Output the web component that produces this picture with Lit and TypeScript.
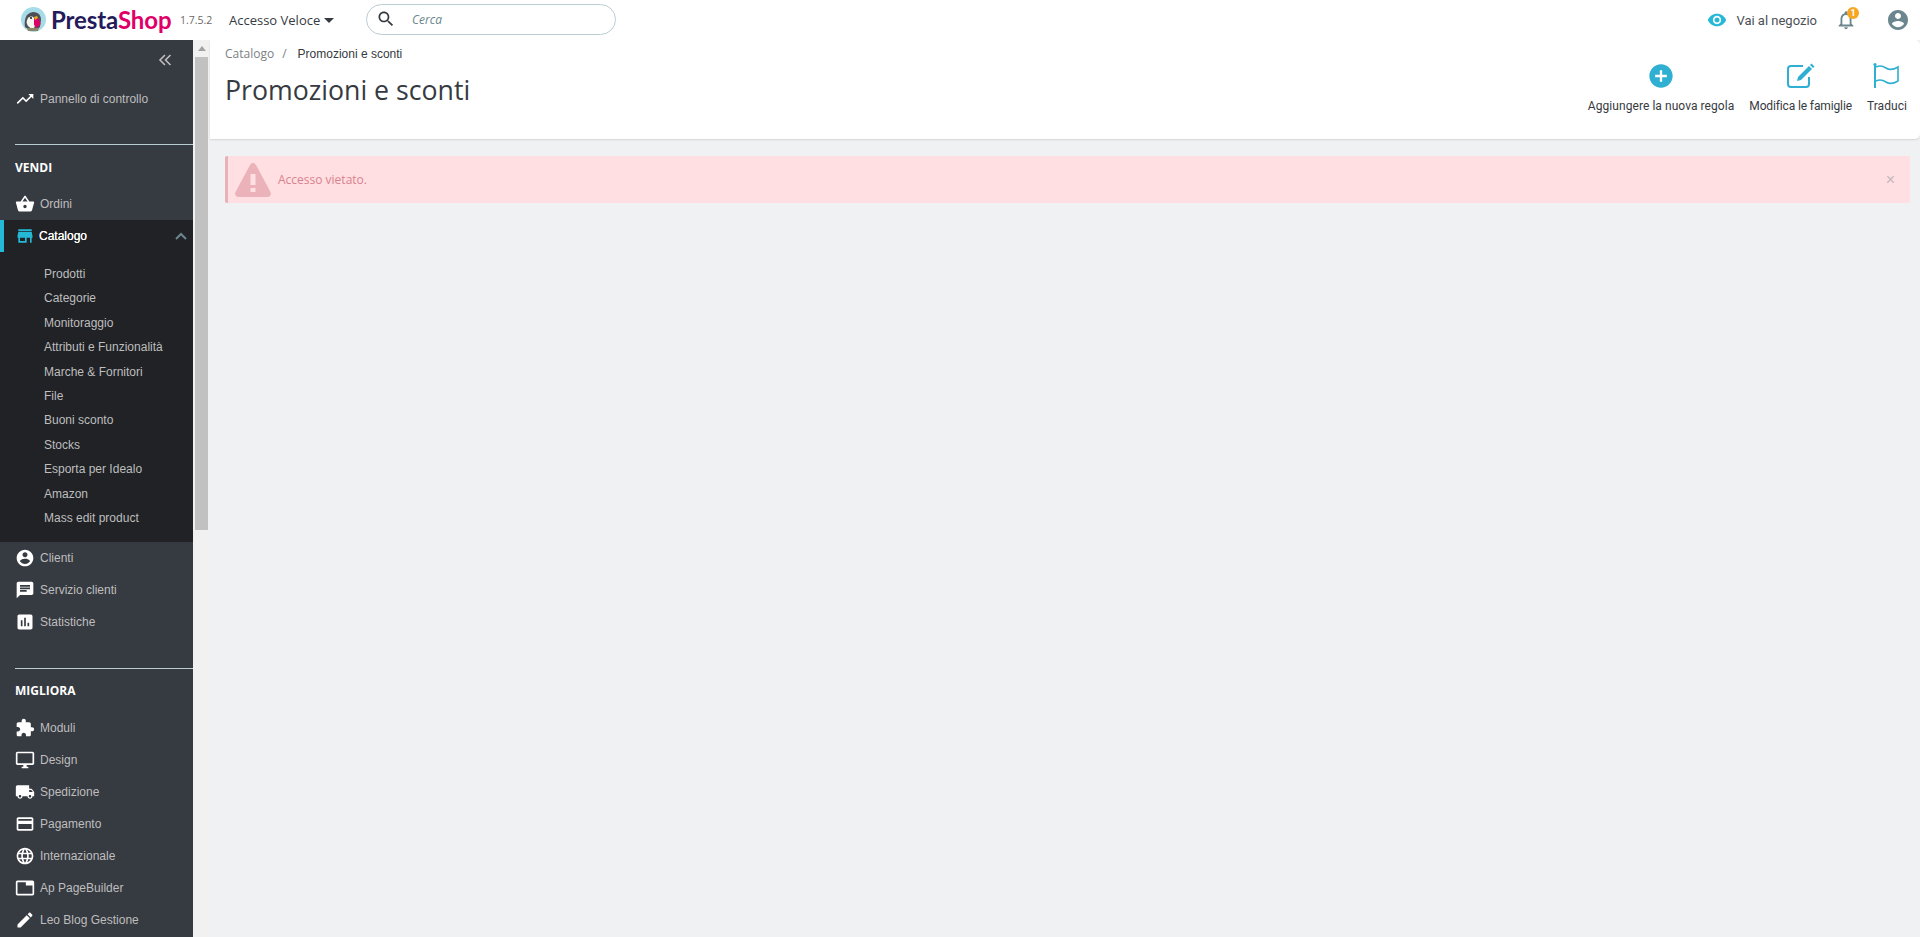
import { LitElement, html, css, svg } from "lit";
import { customElement } from "lit/decorators.js";

const P: Record<string, string> = {
  trend: "M16 6l2.29 2.29-4.88 4.88-4-4L2 16.59 3.41 18l6-6 4 4 6.3-6.29L22 12V6z",
  basket: "M17.21 9l-4.38-6.56c-.19-.28-.51-.42-.83-.42-.32 0-.64.14-.83.43L6.79 9H2c-.55 0-1 .45-1 1 0 .09.01.18.04.27l2.54 9.27c.23.84 1 1.46 1.92 1.46h13c.92 0 1.69-.62 1.93-1.46l2.54-9.27L23 10c0-.55-.45-1-1-1h-4.79zM9 9l3-4.4L15 9H9zm3 8c-1.1 0-2-.9-2-2s.9-2 2-2 2 .9 2 2-.9 2-2 2z",
  store: "M20 4H4v2h16V4zm1 10v-2l-1-5H4l-1 5v2h1v6h10v-6h4v6h2v-6h1zm-9 4H6v-4h6v4z",
  account: "M12 2C6.48 2 2 6.48 2 12s4.48 10 10 10 10-4.48 10-10S17.52 2 12 2zm0 3c1.66 0 3 1.34 3 3s-1.34 3-3 3-3-1.34-3-3 1.34-3 3-3zm0 14.2c-2.5 0-4.71-1.28-6-3.22.03-1.99 4-3.08 6-3.08 1.99 0 5.97 1.09 6 3.08-1.29 1.94-3.5 3.22-6 3.22z",
  chat: "M20 2H4c-1.1 0-1.99.9-1.99 2L2 22l4-4h14c1.1 0 2-.9 2-2V4c0-1.1-.9-2-2-2zM6 9h12v2H6V9zm8 5H6v-2h8v2zm4-6H6V6h12v2z",
  chart: "M19 3H5c-1.1 0-2 .9-2 2v14c0 1.1.9 2 2 2h14c1.1 0 2-.9 2-2V5c0-1.1-.9-2-2-2zM9 17H7v-7h2v7zm4 0h-2V7h2v10zm4 0h-2v-4h2v4z",
  puzzle: "M20.5 11H19V7c0-1.1-.9-2-2-2h-4V3.5C13 2.12 11.88 1 10.5 1S8 2.12 8 3.5V5H4c-1.1 0-1.99.9-1.99 2v3.8H3.5c1.49 0 2.7 1.21 2.7 2.7s-1.21 2.7-2.7 2.7H2V20c0 1.1.9 2 2 2h3.8v-1.5c0-1.49 1.21-2.7 2.7-2.7 1.49 0 2.7 1.21 2.7 2.7V22H17c1.1 0 2-.9 2-2v-4h1.5c1.38 0 2.5-1.12 2.5-2.5S21.88 11 20.5 11z",
  desktop: "M21 2H3c-1.1 0-2 .9-2 2v12c0 1.1.9 2 2 2h7v2H8v2h8v-2h-2v-2h7c1.1 0 2-.9 2-2V4c0-1.1-.9-2-2-2zm0 14H3V4h18v12z",
  truck: "M20 8h-3V4H3c-1.1 0-2 .9-2 2v11h2c0 1.66 1.34 3 3 3s3-1.34 3-3h6c0 1.66 1.34 3 3 3s3-1.34 3-3h2v-5l-3-4zM6 18.5c-.83 0-1.5-.67-1.5-1.5s.67-1.5 1.5-1.5 1.5.67 1.5 1.5-.67 1.5-1.5 1.5zm13.5-9l1.96 2.5H17V9.5h2.5zm-1.5 9c-.83 0-1.5-.67-1.5-1.5s.67-1.5 1.5-1.5 1.5.67 1.5 1.5-.67 1.5-1.5 1.5z",
  card: "M20 4H4c-1.11 0-1.99.89-1.99 2L2 18c0 1.11.89 2 2 2h16c1.11 0 2-.89 2-2V6c0-1.11-.89-2-2-2zm0 14H4v-6h16v6zm0-10H4V6h16v2z",
  globe: "M11.99 2C6.47 2 2 6.48 2 12s4.47 10 9.99 10C17.52 22 22 17.52 22 12S17.52 2 11.99 2zm6.93 6h-2.95c-.32-1.25-.78-2.45-1.38-3.56 1.84.63 3.37 1.91 4.33 3.56zM12 4.04c.83 1.2 1.48 2.53 1.91 3.96h-3.82c.43-1.43 1.08-2.76 1.91-3.96zM4.26 14C4.1 13.36 4 12.69 4 12s.1-1.36.26-2h3.38c-.08.66-.14 1.32-.14 2 0 .68.06 1.34.14 2H4.26zm.82 2h2.95c.32 1.25.78 2.45 1.38 3.56-1.84-.63-3.37-1.9-4.33-3.56zm2.95-8H5.08c.96-1.66 2.49-2.93 4.33-3.56C8.81 5.55 8.35 6.75 8.03 8zM12 19.96c-.83-1.2-1.48-2.53-1.91-3.96h3.82c-.43 1.43-1.08 2.76-1.91 3.96zM14.34 14H9.66c-.09-.66-.16-1.32-.16-2 0-.68.07-1.35.16-2h4.68c.09.65.16 1.32.16 2 0 .68-.07 1.34-.16 2zm.25 5.56c.6-1.11 1.06-2.31 1.38-3.56h2.95c-.96 1.65-2.49 2.93-4.33 3.56zM16.36 14c.08-.66.14-1.32.14-2 0-.68-.06-1.34-.14-2h3.38c.16.64.26 1.31.26 2s-.1 1.36-.26 2h-3.38z",
  tab: "M21 3H3c-1.1 0-2 .9-2 2v14c0 1.1.9 2 2 2h18c1.1 0 2-.9 2-2V5c0-1.1-.9-2-2-2zm0 16H3V5h10v4h8v10z",
  edit: "M3 17.25V21h3.75L17.81 9.94l-3.75-3.75L3 17.25zM20.71 7.04c.39-.39.39-1.02 0-1.41l-2.34-2.34c-.39-.39-1.02-.39-1.41 0l-1.83 1.83 3.75 3.75 1.83-1.83z",
  eye: "M12 4.5C7 4.5 2.73 7.61 1 12c1.73 4.39 6 7.5 11 7.5s9.27-3.11 11-7.5c-1.73-4.39-6-7.5-11-7.5zM12 17c-2.76 0-5-2.24-5-5s2.24-5 5-5 5 2.24 5 5-2.24 5-5 5zm0-8c-1.66 0-3 1.34-3 3s1.34 3 3 3 3-1.34 3-3-1.34-3-3-3z",
  bell: "M12 22c1.1 0 2-.9 2-2h-4c0 1.1.9 2 2 2zm6-6v-5c0-3.07-1.63-5.64-4.5-6.32V4c0-.83-.67-1.5-1.5-1.5s-1.5.67-1.5 1.5v.68C7.64 5.36 6 7.92 6 11v5l-2 2v1h16v-1l-2-2zm-2 1H8v-6c0-2.48 1.51-4.5 4-4.5s4 2.02 4 4.5v6z",
  add: "M12 2C6.48 2 2 6.48 2 12s4.48 10 10 10 10-4.48 10-10S17.52 2 12 2zm5 11h-4v4h-2v-4H7v-2h4V7h2v4h4v2z",
  search: "M15.5 14h-.79l-.28-.27C15.41 12.59 16 11.11 16 9.5 16 5.91 13.09 3 9.5 3S3 5.91 3 9.5 5.91 16 9.5 16c1.61 0 3.09-.59 4.23-1.57l.27.28v.79l5 4.99L20.49 19l-4.99-5zm-6 0C7.01 14 5 11.99 5 9.5S7.01 5 9.5 5 14 7.01 14 9.5 11.99 14 9.5 14z",
};

const icon = (n: string, cls = "") =>
  html`<svg class="ic ${cls}" viewBox="0 0 24 24" fill="currentColor"><path d=${P[n]}></path></svg>`;

const logoMark = svg`
  <circle cx="12.5" cy="12.5" r="12.5" fill="#a6dbe8"/>
  <path d="M4 20c-1-6 0-14 8-15 6 0 8 4 8 8l-1 7c-2 3-12 3-15 0z" fill="#4d4f55"/>
  <path d="M7 11c2-2 5-2 6 0 2 3 2 7 0 10-3 1-6-1-7-4-1-2 0-4 1-6z" fill="#f4f4f0"/>
  <circle cx="10" cy="11" r="1.1" fill="#222"/>
  <path d="M13 11l5 1 1.5 5-3.5 4-3-3z" fill="#df0067"/>
  <path d="M13 10l3-1 1 2-3 2z" fill="#f3a81c"/>
  <path d="M6 21h12l-1 3H7z" fill="#8d8468"/>`;

const top1 = [{ i: "basket", t: "Ordini" }];
const sub = ["Prodotti", "Categorie", "Monitoraggio", "Attributi e Funzionalità", "Marche & Fornitori", "File", "Buoni sconto", "Stocks", "Esporta per Idealo", "Amazon", "Mass edit product"];
const mid = [
  { i: "account", t: "Clienti" },
  { i: "chat", t: "Servizio clienti" },
  { i: "chart", t: "Statistiche" },
];
const low = [
  { i: "puzzle", t: "Moduli" },
  { i: "desktop", t: "Design" },
  { i: "truck", t: "Spedizione" },
  { i: "card", t: "Pagamento" },
  { i: "globe", t: "Internazionale" },
  { i: "tab", t: "Ap PageBuilder" },
  { i: "edit", t: "Leo Blog Gestione" },
];

@customElement("app-root")
export class AppRoot extends LitElement {
  static styles = css`
    :host { display: block; width: 1920px; height: 937px; overflow: hidden; background: #eff1f2; font-family: "Liberation Sans", Arial, sans-serif; }
    * { box-sizing: border-box; }
    .ic { display: block; flex: none; }

    .top { height: 40px; background: #fff; display: flex; align-items: center; padding-left: 21px; }
    .mark { width: 25px; height: 25px; margin-top: -1px; flex: none; }
    .brand { margin-left: 5px; font: 700 24px/40px Lato, sans-serif; color: #251b5b; width: 129px; letter-spacing: -.1px; }
    .brand b { font-weight: 700; color: #df0067; }
    .ver { font: 10.5px "Open Sans", sans-serif; color: #6c6868; width: 49px; }
    .quick { font: 13px "Open Sans", sans-serif; color: #363a41; display: flex; align-items: center; gap: 4px; width: 137px; }
    .caret { width: 0; height: 0; border: 5px solid transparent; border-top: 5px solid #363a41; border-bottom: 0; }
    .search { width: 250px; height: 31px; margin-top: -2px; border: 1px solid #bbcdd2; border-radius: 16px; display: flex; align-items: center; padding-left: 9px; font: italic 12px "Open Sans", sans-serif; color: #6c868e; }
    .search .ic { width: 20px; height: 20px; color: #363a41; margin-right: 16px; }
    .right { margin-left: auto; display: flex; align-items: center; padding-right: 10px; }
    .shop { display: flex; align-items: center; font: 13px Roboto, sans-serif; color: #4a4f57; }
    .shop .ic { width: 20px; height: 20px; color: #25b9d7; margin-right: 9px; }
    .bell { position: relative; margin-left: 18px; width: 22px; height: 22px; color: #6c868e; }
    .bell .ic { width: 22px; height: 22px; }
    .badge { position: absolute; top: -2px; right: -2px; width: 12px; height: 12px; border-radius: 50%; background: #f5a623; color: #fff; font: 700 9px/12px Roboto, sans-serif; text-align: center; }
    .acc { width: 24px; height: 24px; margin-left: 29px; color: #6c868e; }

    .body { display: flex; height: 897px; }
    .side { width: 193px; background: #363a41; flex: none; overflow: hidden; display: flex; flex-direction: column; }
    .collapse { height: 34px; padding: 13px 21px 0 0; display: flex; justify-content: flex-end; color: #bebebe; }
    .collapse svg { width: 14px; height: 14px; }
    .item { height: 32px; display: flex; align-items: center; padding-left: 15px; font-size: 12px; color: #bebebe; }
    .item .ic { width: 20px; height: 20px; color: #fff; margin-right: 5px; }
    .dash { margin-top: 9px; }
    .rule { border-top: 1px solid #bbcdd2; margin: 29px 0 0 15px; }
    .sect { font: 700 12px "Open Sans", sans-serif; color: #fff; padding-left: 15px; height: 43px; display: flex; align-items: center; }
    .sect.first { padding-top: 2px; }
    .open { background: #202226; height: 322px; }
    .open .item { position: relative; color: #fff; text-shadow: 0 0 .4px #fff; }
    .open .item .ic { color: #25b9d7; margin-right: 4px; }
    .bar { position: absolute; left: 0; top: 0; bottom: 0; width: 4px; background: #25b9d7; }
    .chev { position: absolute; left: 175px; top: 12px; width: 12px; height: 8px; color: #6c868e; }
    .subs { padding-top: 10px; }
    .subs div { height: 24.4px; line-height: 24.4px; padding-left: 44px; font-size: 12px; color: #bebebe; }
    .rule2 { margin-top: 30px; }

    .sb { width: 17px; background: #f1f1f1; flex: none; position: relative; }
    .sb .up { position: absolute; left: 5px; top: 6px; width: 0; height: 0; border: 4px solid transparent; border-bottom: 5px solid #a3a3a3; border-top: 0; }
    .sb .thumb { position: absolute; left: 2px; width: 13px; top: 17px; height: 473px; background: #c1c1c1; }

    .main { flex: 1; min-width: 0; }
    .head { height: 99px; background: #fff; box-shadow: 0 1px 2px rgba(0,0,0,.12); border-radius: 0 5px 5px 0; padding: 0 0 0 15px; display: flex; justify-content: space-between; position: relative; }
    .crumb { font: 12px/14px "Open Sans", sans-serif; color: #7d7f85; margin-top: 7px; display: flex; }
    .crumb .sep { margin: 0 11px 0 8px; }
    .crumb .cur { font: 12px/14px "Liberation Sans", sans-serif; color: #363a41; }
    h1 { font: 400 26.7px/36px "Open Sans", sans-serif; color: #363a41; margin: 11px 0 0; }
    .tools { display: flex; align-items: flex-start; padding: 22px 13px 0 0; gap: 15px; }
    .tool { display: flex; flex-direction: column; align-items: center; font: 12px/16px Roboto, sans-serif; color: #363a41; letter-spacing: .06px; }
    .tool.tight { letter-spacing: -.13px; }
    .tool svg { width: 28px; height: 28px; color: #2fb0d3; margin-bottom: 8px; }
    .alert { margin: 17px 10px 0 15px; height: 47px; background: #ffdfe1; border-left: 3px solid #e8b2b8; border-radius: 2px; display: flex; align-items: center; position: relative; padding-left: 7px; font: 12px "Open Sans", sans-serif; color: #d9828f; }
    .warn { width: 36px; height: 34px; color: #ebb3b9; margin-right: 7px; flex: none; }
    .x { position: absolute; right: 15px; top: 50%; transform: translateY(-50%); font: 16px "Liberation Sans", sans-serif; color: #c4b7b9; }
  `;

  private row(r: { i: string; t: string }, cls = "") {
    return html`<div class="item ${cls}">${icon(r.i)}<span>${r.t}</span></div>`;
  }

  render() {
    return html`
      <div class="top">
        <svg class="mark" viewBox="0 0 25 25">${logoMark}</svg>
        <div class="brand">Presta<b>Shop</b></div>
        <div class="ver">1.7.5.2</div>
        <div class="quick">Accesso Veloce <span class="caret"></span></div>
        <div class="search">${icon("search")}<span>Cerca</span></div>
        <div class="right">
          <div class="shop">${icon("eye")}Vai al negozio</div>
          <div class="bell">${icon("bell")}<span class="badge">1</span></div>
          ${icon("account", "acc")}
        </div>
      </div>
      <div class="body">
        <nav class="side">
          <div class="collapse">
            <svg viewBox="0 0 14 14" fill="none" stroke="currentColor" stroke-width="1.6"><path d="M7 2L2 7l5 5M12.5 2l-5 5 5 5"></path></svg>
          </div>
          ${this.row({ i: "trend", t: "Pannello di controllo" }, "dash")}
          <div class="rule"></div>
          <div class="sect first">VENDI</div>
          ${top1.map((r) => this.row(r))}
          <div class="open">
            <div class="item">
              <span class="bar"></span>${icon("store")}<span>Catalogo</span>
              <svg class="chev" viewBox="0 0 12 8" fill="none" stroke="currentColor" stroke-width="2"><path d="M1 7l5-5 5 5"></path></svg>
            </div>
            <div class="subs">${sub.map((s) => html`<div>${s}</div>`)}</div>
          </div>
          <div>${mid.map((r) => this.row(r))}</div>
          <div class="rule rule2"></div>
          <div class="sect">MIGLIORA</div>
          ${low.map((r) => this.row(r))}
        </nav>
        <div class="sb"><span class="up"></span><span class="thumb"></span></div>
        <main class="main">
          <div class="head">
            <div>
              <div class="crumb"><span>Catalogo</span><span class="sep">/</span><span class="cur">Promozioni e sconti</span></div>
              <h1>Promozioni e sconti</h1>
            </div>
            <div class="tools">
              <div class="tool">${icon("add")}Aggiungere la nuova regola</div>
              <div class="tool tight">
                <svg viewBox="0 0 28 28" fill="none" stroke="currentColor" stroke-width="2"><path d="M22 15v7a3 3 0 0 1-3 3H4a3 3 0 0 1-3-3V7a3 3 0 0 1 3-3h12"></path><path d="M10 19l1-4L22 4l3 3-11 11z" fill="currentColor" stroke="none"></path><path d="M23 3l1.5-1.5 3 3L26 6z" fill="currentColor" stroke="none"></path></svg>
                Modifica le famiglie
              </div>
              <div class="tool">
                <svg viewBox="0 0 28 28" fill="none" stroke="currentColor" stroke-width="1.6"><path d="M2 2v24" stroke-width="2"></path><circle cx="2" cy="2.5" r="1.6" fill="currentColor" stroke="none"></circle><path d="M3 5c4-2 7-1 10 1s7 2 12-1v14c-5 3-9 3-12 1s-6-3-10-1"></path></svg>
                Traduci
              </div>
            </div>
          </div>
          <div class="alert">
            <svg class="warn" viewBox="0 0 36 34" fill="currentColor" fill-rule="evenodd"><path d="M18 0c1 0 2 .5 3 2l14.500 27c1 2.500 0 5-3 5H3.500c-3 0-4-2.500-3-5L15 2c1-1.500 2-2 3-2zM15.500 11v11h5V11zM15.500 25v4h5v-4z"></path></svg>
            Accesso vietato.<span class="x">×</span>
          </div>
        </main>
      </div>
    `;
  }
}
